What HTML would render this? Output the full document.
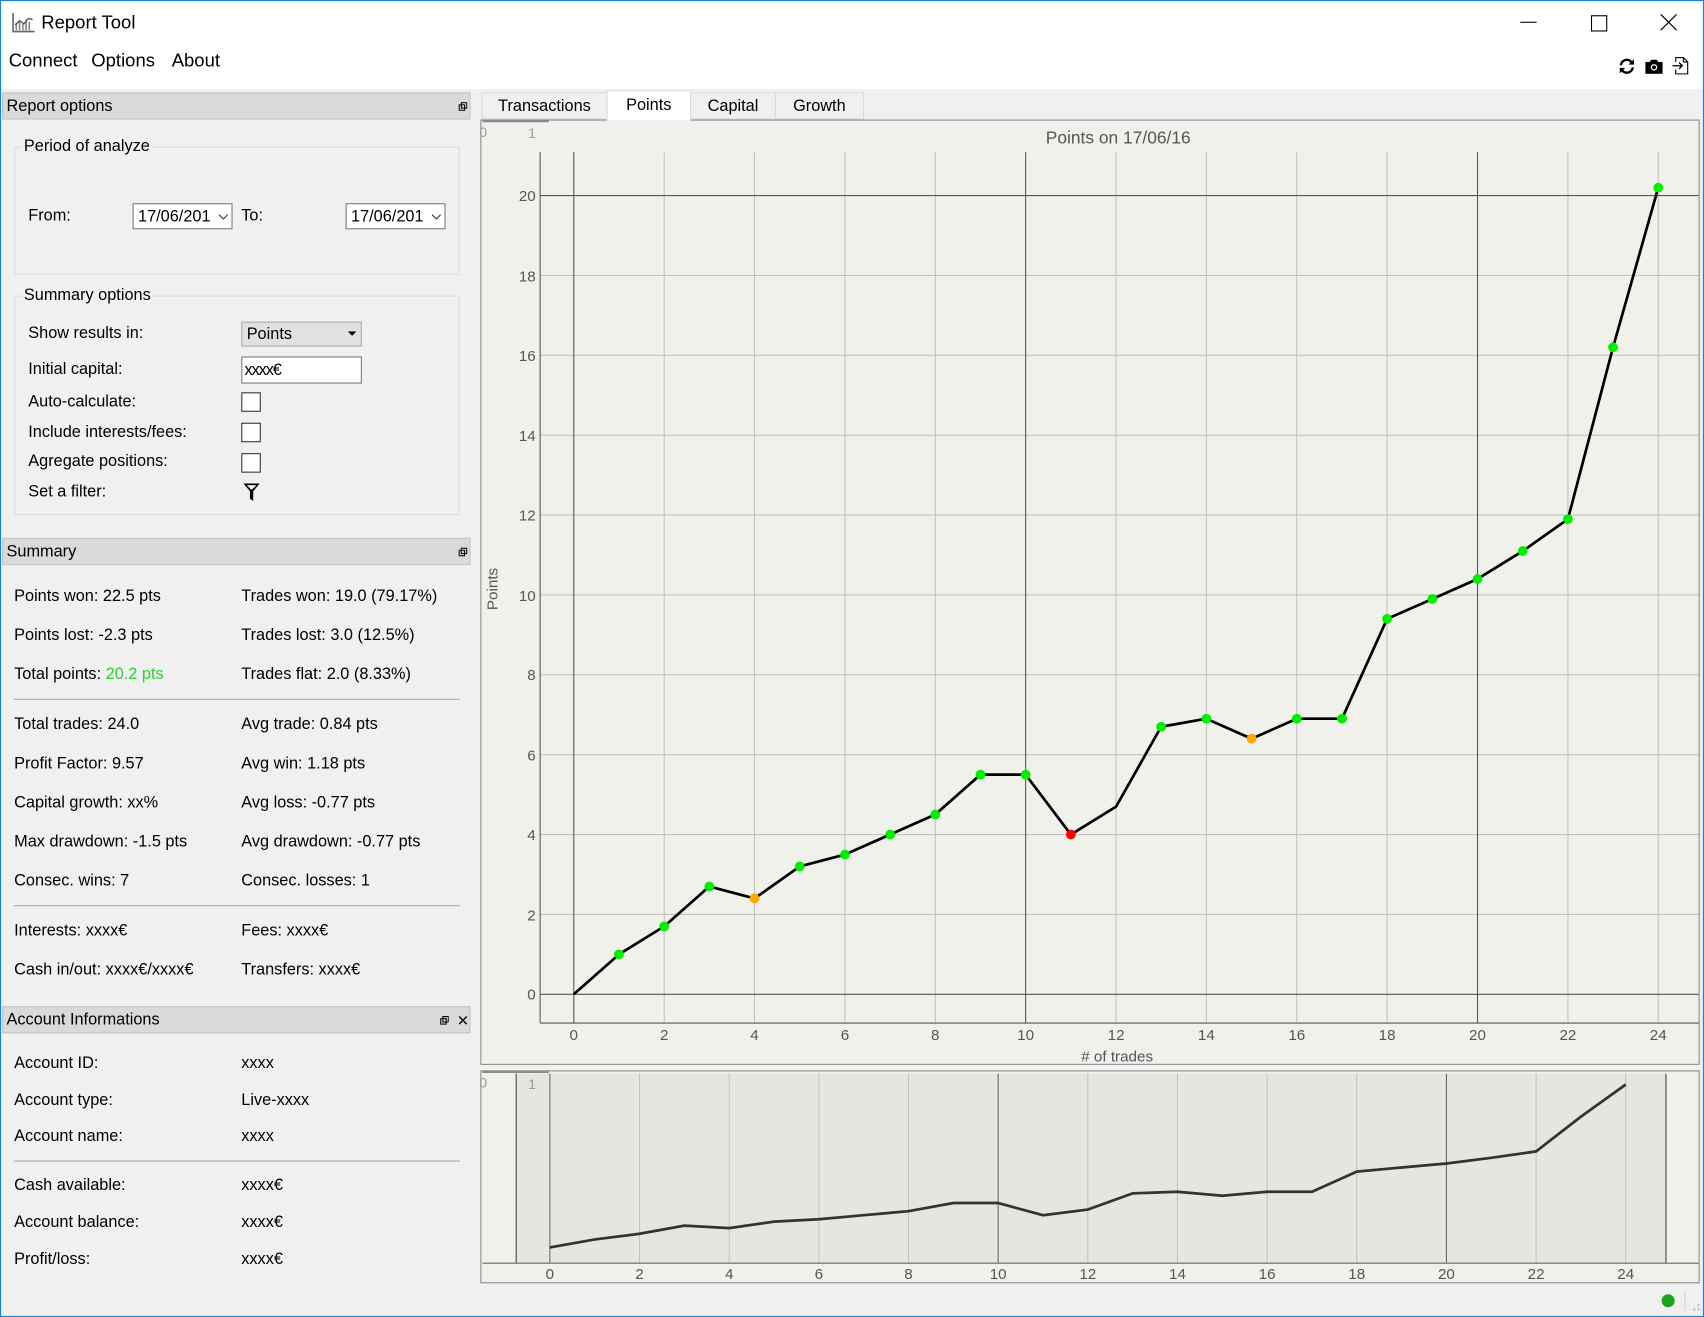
<!DOCTYPE html>
<html><head><meta charset="utf-8">
<style>
html,body{margin:0;padding:0;width:1704px;height:1317px;overflow:hidden;background:#fff;}
#root{position:absolute;left:0;top:0;width:1568px;height:1212px;transform:scale(1.08673,1.08664);transform-origin:0 0;font-family:"Liberation Sans",sans-serif;font-size:15px;color:#000;background:#f0f0f0;}
.a{position:absolute;white-space:nowrap;}
.hdr{position:absolute;left:2px;width:431px;height:25px;background:#dadada;border:1px solid #c4c4c4;box-sizing:border-box;}
.hdr span{position:absolute;left:3px;top:3px;}
.grp{position:absolute;border:1px solid #dcdcdc;box-sizing:border-box;}
.gt{position:absolute;background:#f0f0f0;padding:0 2px;}
.cb{position:absolute;width:18px;height:18px;border:1px solid #333;background:#fff;box-sizing:border-box;}
.hl{position:absolute;left:13px;width:410px;height:1px;background:#a8a8a8;}
.tab{position:absolute;top:85px;height:25px;border:1px solid #d9d9d9;box-sizing:border-box;background:#f0f0f0;text-align:center;line-height:24px;}
</style></head><body>
<div id="root">
<!-- white top area -->
<div class="a" style="left:0;top:0;width:1568px;height:82px;background:#fff;"></div>
<!-- window border -->
<div class="a" style="left:0;top:0;width:1568px;height:1212px;border:1px solid #1883d7;box-sizing:border-box;z-index:5;pointer-events:none;"></div>
<!-- title icon -->
<svg class="a" style="left:11px;top:11px" width="22" height="20" viewBox="0 0 22 20"><path d="M1 1V18H21" stroke="#666" fill="none" stroke-width="1.5"/><path d="M4 17V10M7 17V8M10 17V11M13 17V7M16 17V9" stroke="#888" stroke-width="1.5"/><path d="M3 12L7 8L11 11L15 6L19 7" stroke="#555" fill="none" stroke-width="1.2"/></svg>
<div class="a" style="left:38px;top:11px;font-size:17px;">Report Tool</div>
<!-- window controls -->
<div class="a" style="left:1399px;top:20px;width:15px;height:1px;background:#000;"></div>
<div class="a" style="left:1464px;top:14px;width:13px;height:13px;border:1px solid #000;"></div>
<svg class="a" style="left:1528px;top:13px" width="15" height="15"><path d="M0 0L15 15M15 0L0 15" stroke="#000" stroke-width="1.1"/></svg>
<!-- menu -->
<div class="a" style="left:8px;top:46px;font-size:17px;">Connect</div>
<div class="a" style="left:84px;top:46px;font-size:17px;">Options</div>
<div class="a" style="left:158px;top:46px;font-size:17px;">About</div>
<!-- toolbar icons -->
<svg class="a" style="left:1489px;top:53px" width="16" height="16" viewBox="0 0 16 16"><path d="M2.5 7A5.5 5.5 0 0 1 12.5 4.5" stroke="#000" stroke-width="2.2" fill="none"/><path d="M14.5 1.5V6.5H9.5Z" fill="#000"/><path d="M13.5 9A5.5 5.5 0 0 1 3.5 11.5" stroke="#000" stroke-width="2.2" fill="none"/><path d="M1.5 14.5V9.5H6.5Z" fill="#000"/></svg>
<svg class="a" style="left:1514px;top:54px" width="16" height="14" viewBox="0 0 16 14"><path d="M0 3H4L5.5 1H10.5L12 3H16V14H0Z" fill="#000"/><circle cx="8" cy="8" r="3" fill="#fff"/><circle cx="8" cy="8" r="1.8" fill="#000"/></svg>
<svg class="a" style="left:1539px;top:52px" width="15" height="17" viewBox="0 0 15 17"><path d="M3 5V1H10L14 5V16H3V12" stroke="#000" fill="none"/><path d="M10 1V5H14" stroke="#000" fill="none"/><path d="M0 8.5H9M6 5.5L9 8.5L6 11.5" stroke="#000" fill="none" stroke-width="1.2"/></svg>

<!-- LEFT PANEL -->
<div class="hdr" style="top:85px;"><span>Report options</span></div>
<svg class="a" style="left:422px;top:94px" width="8" height="8"><path d="M2.5 0.5H7.5V5.5H2.5ZM0.5 2.5H5.5V7.5H0.5Z" stroke="#000" fill="#dadada"/></svg>

<div class="grp" style="left:13px;top:135px;width:410px;height:118px;"></div>
<div class="gt" style="left:20px;top:126px;">Period of analyze</div>
<div class="a" style="left:26px;top:190px;">From:</div>
<div class="a" style="left:122px;top:187px;width:92px;height:24px;border:1px solid #7a7a7a;background:#fff;box-sizing:border-box;"><span style="position:absolute;left:4px;top:3px;">17/06/201</span><svg style="position:absolute;left:78px;top:9px" width="9" height="6"><path d="M0.5 0.5L4.5 4.5L8.5 0.5" stroke="#333" fill="none"/></svg></div>
<div class="a" style="left:222px;top:190px;">To:</div>
<div class="a" style="left:318px;top:187px;width:92px;height:24px;border:1px solid #7a7a7a;background:#fff;box-sizing:border-box;"><span style="position:absolute;left:4px;top:3px;">17/06/201</span><svg style="position:absolute;left:78px;top:9px" width="9" height="6"><path d="M0.5 0.5L4.5 4.5L8.5 0.5" stroke="#333" fill="none"/></svg></div>

<div class="grp" style="left:13px;top:272px;width:410px;height:202px;"></div>
<div class="gt" style="left:20px;top:263px;">Summary options</div>
<div class="a" style="left:26px;top:298px;">Show results in:</div>
<div class="a" style="left:222px;top:296px;width:111px;height:23px;border:1px solid #adadad;background:#e1e1e1;box-sizing:border-box;"><span style="position:absolute;left:4px;top:2px;">Points</span><svg style="position:absolute;left:97px;top:8px" width="8" height="5"><path d="M0 0H8L4 4Z" fill="#000"/></svg></div>
<div class="a" style="left:26px;top:331px;">Initial capital:</div>
<div class="a" style="left:222px;top:328px;width:111px;height:25px;border:1px solid #7a7a7a;background:#fff;box-sizing:border-box;"><span style="position:absolute;left:2px;top:3px;letter-spacing:-1px;">xxxx€</span></div>
<div class="a" style="left:26px;top:361px;">Auto-calculate:</div>
<div class="cb" style="left:222px;top:361px;"></div>
<div class="a" style="left:26px;top:389px;">Include interests/fees:</div>
<div class="cb" style="left:222px;top:389px;"></div>
<div class="a" style="left:26px;top:416px;">Agregate positions:</div>
<div class="cb" style="left:222px;top:417px;"></div>
<div class="a" style="left:26px;top:444px;">Set a filter:</div>
<svg class="a" style="left:224px;top:445px" width="15" height="16" viewBox="0 0 15 16"><path d="M0 0H15L9 7V16L6 14V7Z" fill="#000"/><path d="M3 1.5H12L8 5.5H7Z" fill="#f0f0f0"/></svg>

<div class="hdr" style="top:495px;"><span>Summary</span></div>
<svg class="a" style="left:422px;top:504px" width="8" height="8"><path d="M2.5 0.5H7.5V5.5H2.5ZM0.5 2.5H5.5V7.5H0.5Z" stroke="#000" fill="#dadada"/></svg>
<div class="a" style="left:13px;top:540px;">Points won: 22.5 pts</div>
<div class="a" style="left:222px;top:540px;">Trades won: 19.0 (79.17%)</div>
<div class="a" style="left:13px;top:576px;">Points lost: -2.3 pts</div>
<div class="a" style="left:222px;top:576px;">Trades lost: 3.0 (12.5%)</div>
<div class="a" style="left:13px;top:612px;">Total points: <span style="color:#2fcf2f">20.2 pts</span></div>
<div class="a" style="left:222px;top:612px;">Trades flat: 2.0 (8.33%)</div>
<div class="hl" style="top:643px;"></div>
<div class="a" style="left:13px;top:658px;">Total trades: 24.0</div>
<div class="a" style="left:222px;top:658px;">Avg trade: 0.84 pts</div>
<div class="a" style="left:13px;top:694px;">Profit Factor: 9.57</div>
<div class="a" style="left:222px;top:694px;">Avg win: 1.18 pts</div>
<div class="a" style="left:13px;top:730px;">Capital growth: xx%</div>
<div class="a" style="left:222px;top:730px;">Avg loss: -0.77 pts</div>
<div class="a" style="left:13px;top:766px;">Max drawdown: -1.5 pts</div>
<div class="a" style="left:222px;top:766px;">Avg drawdown: -0.77 pts</div>
<div class="a" style="left:13px;top:802px;">Consec. wins: 7</div>
<div class="a" style="left:222px;top:802px;">Consec. losses: 1</div>
<div class="hl" style="top:833px;"></div>
<div class="a" style="left:13px;top:848px;">Interests: xxxx€</div>
<div class="a" style="left:222px;top:848px;">Fees: xxxx€</div>
<div class="a" style="left:13px;top:884px;">Cash in/out: xxxx€/xxxx€</div>
<div class="a" style="left:222px;top:884px;">Transfers: xxxx€</div>

<div class="hdr" style="top:926px;"><span>Account Informations</span></div>
<svg class="a" style="left:405px;top:935px" width="8" height="8"><path d="M2.5 0.5H7.5V5.5H2.5ZM0.5 2.5H5.5V7.5H0.5Z" stroke="#000" fill="#dadada"/></svg>
<svg class="a" style="left:422px;top:935px" width="8" height="8"><path d="M0.5 0.5L7.5 7.5M7.5 0.5L0.5 7.5" stroke="#000" stroke-width="1.3"/></svg>
<div class="a" style="left:13px;top:970px;">Account ID:</div><div class="a" style="left:222px;top:970px;">xxxx</div>
<div class="a" style="left:13px;top:1004px;">Account type:</div><div class="a" style="left:222px;top:1004px;">Live-xxxx</div>
<div class="a" style="left:13px;top:1037px;">Account name:</div><div class="a" style="left:222px;top:1037px;">xxxx</div>
<div class="hl" style="top:1068px;"></div>
<div class="a" style="left:13px;top:1082px;">Cash available:</div><div class="a" style="left:222px;top:1082px;">xxxx€</div>
<div class="a" style="left:13px;top:1116px;">Account balance:</div><div class="a" style="left:222px;top:1116px;">xxxx€</div>
<div class="a" style="left:13px;top:1150px;">Profit/loss:</div><div class="a" style="left:222px;top:1150px;">xxxx€</div>

<!-- TABS -->
<div class="tab" style="left:443px;width:116px;">Transactions</div>
<div class="tab" style="left:558px;width:78px;top:83px;height:28px;background:#fff;border-bottom:none;z-index:2;line-height:26px;">Points</div>
<div class="tab" style="left:635px;width:79px;">Capital</div>
<div class="tab" style="left:713px;width:82px;">Growth</div>

<!-- CHARTS -->
<svg class="a" style="left:0;top:0" width="1568" height="1212" viewBox="0 0 1568 1212" font-family="Liberation Sans, sans-serif">
<rect x="442.5" y="110.5" width="1121" height="869" fill="#f1f1ec" stroke="#8a8a8a"/>
<line x1="444" y1="111.5" x2="505" y2="111.5" stroke="#8a8a8a" stroke-width="2"/>
<text x="441" y="126" font-size="13" fill="#999">0</text>
<text x="486" y="127" font-size="13" fill="#999">1</text>
<text x="1029" y="132" font-size="16" fill="#555" text-anchor="middle">Points on 17/06/16</text>
<g stroke="#c2c2c2" stroke-width="1">
<line x1="611.2" y1="140" x2="611.2" y2="941"/><line x1="694.3" y1="140" x2="694.3" y2="941"/><line x1="777.5" y1="140" x2="777.5" y2="941"/><line x1="860.6" y1="140" x2="860.6" y2="941"/><line x1="1027" y1="140" x2="1027" y2="941"/><line x1="1110.1" y1="140" x2="1110.1" y2="941"/><line x1="1193.3" y1="140" x2="1193.3" y2="941"/><line x1="1276.4" y1="140" x2="1276.4" y2="941"/><line x1="1442.8" y1="140" x2="1442.8" y2="941"/><line x1="1525.9" y1="140" x2="1525.9" y2="941"/>
<line x1="497" y1="841.5" x2="1563" y2="841.5"/><line x1="497" y1="768" x2="1563" y2="768"/><line x1="497" y1="694.5" x2="1563" y2="694.5"/><line x1="497" y1="621" x2="1563" y2="621"/><line x1="497" y1="547.5" x2="1563" y2="547.5"/><line x1="497" y1="474" x2="1563" y2="474"/><line x1="497" y1="400.5" x2="1563" y2="400.5"/><line x1="497" y1="327" x2="1563" y2="327"/><line x1="497" y1="253.5" x2="1563" y2="253.5"/>
</g>
<g stroke="#555" stroke-width="1">
<line x1="528" y1="140" x2="528" y2="941"/><line x1="943.8" y1="140" x2="943.8" y2="941"/><line x1="1359.6" y1="140" x2="1359.6" y2="941"/>
<line x1="497" y1="915" x2="1563" y2="915"/><line x1="497" y1="180" x2="1563" y2="180"/>
<line x1="497" y1="140" x2="497" y2="941"/><line x1="497" y1="941.5" x2="1563" y2="941.5"/>
</g>
<g font-size="14" fill="#555" text-anchor="end">
<text x="493" y="920">0</text><text x="493" y="847">2</text><text x="493" y="773">4</text><text x="493" y="700">6</text><text x="493" y="626">8</text><text x="493" y="553">10</text><text x="493" y="479">12</text><text x="493" y="406">14</text><text x="493" y="332">16</text><text x="493" y="259">18</text><text x="493" y="185">20</text>
</g>
<g font-size="14" fill="#555" text-anchor="middle">
<text x="528" y="957">0</text><text x="611.2" y="957">2</text><text x="694.3" y="957">4</text><text x="777.5" y="957">6</text><text x="860.6" y="957">8</text><text x="943.8" y="957">10</text><text x="1027" y="957">12</text><text x="1110.1" y="957">14</text><text x="1193.3" y="957">16</text><text x="1276.4" y="957">18</text><text x="1359.6" y="957">20</text><text x="1442.8" y="957">22</text><text x="1525.9" y="957">24</text>
<text x="1028" y="977">#  of trades</text>
<text x="458" y="542" transform="rotate(-90 458 542)">Points</text>
</g>
<polyline fill="none" stroke="#000" stroke-width="2.5" stroke-linejoin="round" points="528,915 569.6,878.25 611.2,852.5 652.7,815.8 694.3,826.8 735.9,797.4 777.5,786.4 819.1,768 860.6,749.6 902.2,712.9 943.8,712.9 985.4,768 1027,742.3 1068.5,668.8 1110.1,661.4 1151.7,679.8 1193.3,661.4 1234.9,661.4 1276.4,569.5 1318,551.2 1359.6,532.8 1401.2,507.1 1442.8,477.7 1484.3,319.6 1525.9,172.7"/>
<g fill="#00ee00">
<circle cx="569.6" cy="878.25" r="4.5"/><circle cx="611.2" cy="852.5" r="4.5"/><circle cx="652.7" cy="815.8" r="4.5"/><circle cx="735.9" cy="797.4" r="4.5"/><circle cx="777.5" cy="786.4" r="4.5"/><circle cx="819.1" cy="768" r="4.5"/><circle cx="860.6" cy="749.6" r="4.5"/><circle cx="902.2" cy="712.9" r="4.5"/><circle cx="943.8" cy="712.9" r="4.5"/><circle cx="1068.5" cy="668.8" r="4.5"/><circle cx="1110.1" cy="661.4" r="4.5"/><circle cx="1193.3" cy="661.4" r="4.5"/><circle cx="1234.9" cy="661.4" r="4.5"/><circle cx="1276.4" cy="569.5" r="4.5"/><circle cx="1318" cy="551.2" r="4.5"/><circle cx="1359.6" cy="532.8" r="4.5"/><circle cx="1401.2" cy="507.1" r="4.5"/><circle cx="1442.8" cy="477.7" r="4.5"/><circle cx="1484.3" cy="319.6" r="4.5"/><circle cx="1525.9" cy="172.7" r="4.5"/>
</g>
<circle cx="694.3" cy="826.8" r="4.5" fill="#ffa500"/><circle cx="1151.7" cy="679.8" r="4.5" fill="#ffa500"/><circle cx="985.4" cy="768" r="4.5" fill="#ff0000"/>

<!-- overview -->
<rect x="442.5" y="985.5" width="1121" height="195" fill="#f1f1ec" stroke="#8a8a8a"/>
<line x1="444" y1="986.5" x2="505" y2="986.5" stroke="#8a8a8a" stroke-width="2"/>
<rect x="475" y="988" width="1058" height="174" fill="#e6e6e1"/>
<text x="441" y="1001" font-size="13" fill="#999">0</text>
<text x="486" y="1002" font-size="13" fill="#999">1</text>
<g stroke="#c2c2c2">
<line x1="588.5" y1="988" x2="588.5" y2="1162"/><line x1="671" y1="988" x2="671" y2="1162"/><line x1="753.5" y1="988" x2="753.5" y2="1162"/><line x1="836" y1="988" x2="836" y2="1162"/><line x1="1001" y1="988" x2="1001" y2="1162"/><line x1="1083.5" y1="988" x2="1083.5" y2="1162"/><line x1="1166" y1="988" x2="1166" y2="1162"/><line x1="1248.5" y1="988" x2="1248.5" y2="1162"/><line x1="1413.5" y1="988" x2="1413.5" y2="1162"/><line x1="1496" y1="988" x2="1496" y2="1162"/>
</g>
<g stroke="#666">
<line x1="506" y1="988" x2="506" y2="1162"/><line x1="918.5" y1="988" x2="918.5" y2="1162"/><line x1="1331" y1="988" x2="1331" y2="1162"/>
<line x1="475" y1="988" x2="475" y2="1162" stroke="#444"/><line x1="1533" y1="988" x2="1533" y2="1162" stroke="#444"/>
<line x1="444" y1="1162.5" x2="1563" y2="1162.5"/>
</g>
<g font-size="14" fill="#555" text-anchor="middle">
<text x="506" y="1177">0</text><text x="588.5" y="1177">2</text><text x="671" y="1177">4</text><text x="753.5" y="1177">6</text><text x="836" y="1177">8</text><text x="918.5" y="1177">10</text><text x="1001" y="1177">12</text><text x="1083.5" y="1177">14</text><text x="1166" y="1177">16</text><text x="1248.5" y="1177">18</text><text x="1331" y="1177">20</text><text x="1413.5" y="1177">22</text><text x="1496" y="1177">24</text>
</g>
<polyline fill="none" stroke="#333" stroke-width="2.5" points="506,1148 547.3,1140.6 588.5,1135.4 629.8,1127.9 671,1130.2 712.3,1124.2 753.5,1122 794.8,1118.3 836,1114.6 877.3,1107.1 918.5,1107.1 959.8,1118.3 1001,1113.1 1042.3,1098.2 1083.5,1096.7 1124.8,1100.4 1166,1096.7 1207.3,1096.7 1248.5,1078.2 1289.8,1074.4 1331,1070.7 1372.3,1065.5 1413.5,1059.6 1454.8,1027.6 1496,998"/>
<!-- status -->
<circle cx="1535" cy="1197" r="6" fill="#1ea51e"/>
<line x1="1550.5" y1="1188" x2="1550.5" y2="1206" stroke="#d0d0d0"/>
<g fill="#bbb"><rect x="1562" y="1200" width="2" height="2"/><rect x="1558" y="1204" width="2" height="2"/><rect x="1562" y="1204" width="2" height="2"/></g>
</svg>
</div>
</body></html>
